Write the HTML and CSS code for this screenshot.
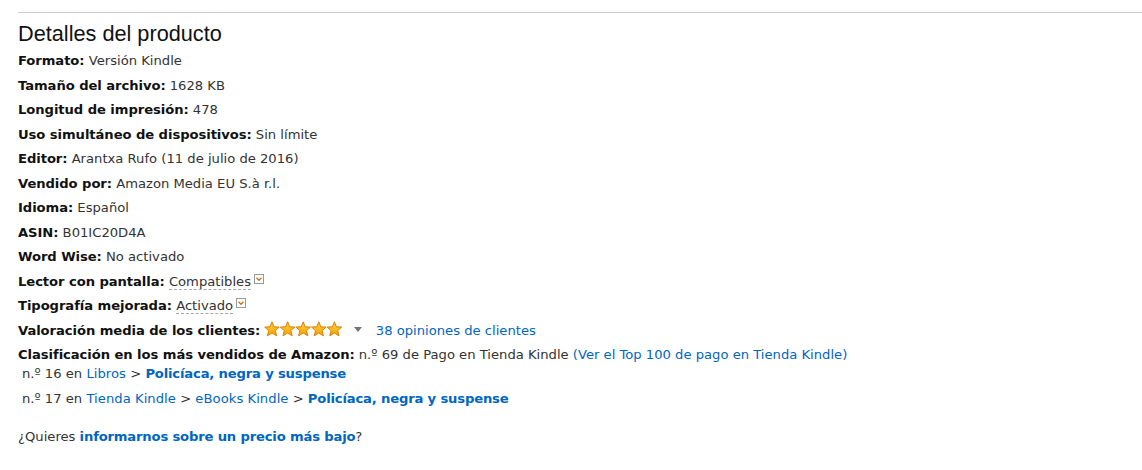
FILE: index.html
```html
<!DOCTYPE html>
<html lang="es">
<head>
<meta charset="utf-8">
<title>Detalles del producto</title>
<link rel="stylesheet" href="styles.css">
</head>
<body>
<div class="page">
  <hr class="divider">
  <h2 class="title">Detalles del producto</h2>
  <ul class="details">
    <li><b>Formato:</b> Versión Kindle</li>
    <li><b>Tamaño del archivo:</b> 1628 KB</li>
    <li><b>Longitud de impresión:</b> 478</li>
    <li><b>Uso simultáneo de dispositivos:</b> Sin límite</li>
    <li><b>Editor:</b> Arantxa Rufo (11 de julio de 2016)</li>
    <li><b>Vendido por:</b> Amazon Media EU S.à r.l.</li>
    <li><b>Idioma:</b> Español</li>
    <li><b>ASIN:</b> B01IC20D4A</li>
    <li><b>Word Wise:</b> No activado</li>
    <li><b>Lector con pantalla:</b> <span class="dotted">Compatibles</span><span class="popbtn"><svg viewBox="0 0 10 10" width="10" height="10"><rect x="0.5" y="0.5" width="9" height="9" fill="#fff" stroke="#9a9a9a"/><path d="M2.5 3.8 L5 6.3 L7.5 3.8" fill="none" stroke="#c47a12" stroke-width="1.4"/></svg></span></li>
    <li><b>Tipografía mejorada:</b> <span class="dotted">Activado</span><span class="popbtn"><svg viewBox="0 0 10 10" width="10" height="10"><rect x="0.5" y="0.5" width="9" height="9" fill="#fff" stroke="#9a9a9a"/><path d="M2.5 3.8 L5 6.3 L7.5 3.8" fill="none" stroke="#c47a12" stroke-width="1.4"/></svg></span></li>
    <li class="rating"><b>Valoración media de los clientes:</b>
      <span class="stars">
        <svg viewBox="0 0 79 16" width="79" height="16">
          <defs>
            <linearGradient id="g" x1="0" y1="0" x2="0" y2="1">
              <stop offset="0" stop-color="#ffd040"/>
              <stop offset="1" stop-color="#f5a300"/>
            </linearGradient>
            <path id="s" d="M8 0.8 L10 5.8 L15.3 6.1 L11.3 9.6 L12.6 14.8 L8 12 L3.4 14.8 L4.7 9.6 L0.7 6.1 L6 5.8 Z" fill="url(#g)" stroke="#d98200" stroke-width="1" stroke-linejoin="round"/>
          </defs>
          <use href="#s" x="0"/>
          <use href="#s" x="15.6"/>
          <use href="#s" x="31.2"/>
          <use href="#s" x="46.8"/>
          <use href="#s" x="62.4"/>
        </svg>
      </span>
      <span class="caret"><svg viewBox="0 0 8 5" width="8" height="5"><path d="M0 0 L8 0 L4 5 Z" fill="#767676"/></svg></span>
      <a href="#">38 opiniones de clientes</a>
    </li>
    <li class="rank"><b>Clasificación en los más vendidos de Amazon:</b> n.º 69 de Pago en Tienda Kindle <a href="#">(Ver el Top 100 de pago en Tienda Kindle)</a>
      <ul class="subrank">
        <li>n.º 16 en <a href="#">Libros</a> &gt; <a href="#" class="strong">Policíaca, negra y suspense</a></li>
        <li>n.º 17 en <a href="#">Tienda Kindle</a> &gt; <a href="#">eBooks Kindle</a> &gt; <a href="#" class="strong">Policíaca, negra y suspense</a></li>
      </ul>
    </li>
  </ul>
  <p class="lower">¿Quieres <a href="#" class="strong">informarnos sobre un precio más bajo</a>?</p>
</div>
</body>
</html>
```

FILE: styles.css
```css
html, body {
  margin: 0;
  padding: 0;
  background: #fff;
}
.page {
  padding: 12px 0 0 18px;
  font-family: "DejaVu Sans", Verdana, sans-serif;
  font-size: 13.15px;
  color: #111;
}
.divider {
  border: 0;
  border-top: 1px solid #cccccc;
  margin: 0;
  height: 0;
}
.title {
  font-family: "Liberation Sans", Arial, sans-serif;
  font-weight: normal;
  font-size: 21.7px;
  line-height: 24px;
  margin: 9px 0 5px 0;
  color: #111;
}
.details {
  list-style: none;
  margin: 0;
  padding: 0;
}
.details > li {
  line-height: 19px;
  margin-bottom: 5.5px;
  color: #333;
}
.details b {
  font-weight: bold;
  color: #111;
  letter-spacing: -0.07px;
}
a {
  color: #0066c0;
  text-decoration: none;
}
a.strong {
  font-weight: bold;
  letter-spacing: -0.17px;
}
.subrank a {
  letter-spacing: 0.05px;
}
.subrank a.strong {
  letter-spacing: -0.17px;
}
.dotted {
  border-bottom: 1px dashed #a2a6ac;
}
.popbtn {
  display: inline-block;
  margin-left: 3px;
  vertical-align: 2px;
}
.popbtn svg {
  display: block;
}
.stars {
  display: inline-block;
  vertical-align: -2px;
}
.stars svg {
  display: block;
}
.caret {
  display: inline-block;
  margin: 0 10px 0 6px;
  vertical-align: 3px;
}
.caret svg {
  display: block;
}
.subrank {
  list-style: none;
  margin: 0;
  padding: 0 0 0 4px;
}
.subrank li {
  line-height: 19px;
}
.subrank li + li {
  margin-top: 6px;
}
.lower {
  margin: 19px 0 0 0;
  line-height: 19px;
  color: #333;
}
```
